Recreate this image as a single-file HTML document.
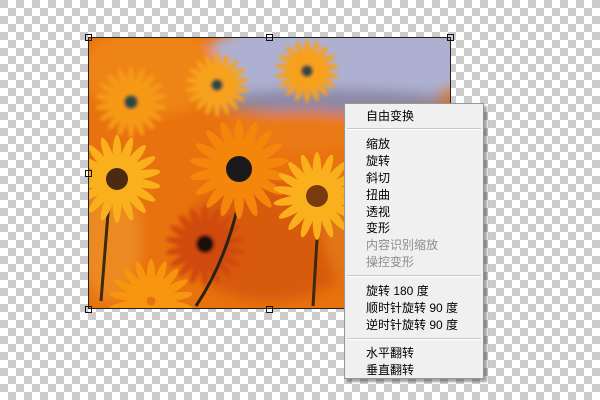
<!DOCTYPE html>
<html><head><meta charset="utf-8"><style>
html,body{margin:0;padding:0;width:600px;height:400px;overflow:hidden}
body{position:relative;background-color:#fff;
background-image:linear-gradient(45deg,#ccc 25%,transparent 25%,transparent 75%,#ccc 75%),linear-gradient(45deg,#ccc 25%,transparent 25%,transparent 75%,#ccc 75%);
background-size:16px 16px;background-position:8px 0,0 8px;}
#img{position:absolute;left:88px;top:37px;width:363px;height:272px;overflow:hidden;border:1px solid #222;box-sizing:border-box}
.h{position:absolute;width:7px;height:7px;border:1px solid #111;box-sizing:border-box}
#menu{position:absolute;left:344px;top:103px;width:140px;height:276px;background:#f0f0f0;border:1px solid #979797;box-sizing:border-box;box-shadow:3px 3px 2px rgba(0,0,0,.35);
font-family:"Liberation Sans","Noto Sans CJK SC","WenQuanYi Zen Hei",sans-serif;font-size:12px;color:#000}
.it{position:absolute;left:21px;line-height:14px;white-space:nowrap}
.dis{color:#8d8d8d}
.sep{position:absolute;left:2px;right:2px;height:1px;background:#c8c8c8;border-bottom:1px solid #fff}
</style></head><body>
<div id="img">
<svg width="363" height="272" viewBox="88 37 363 272" xmlns="http://www.w3.org/2000/svg">
<defs>
<filter id="b"><feGaussianBlur stdDeviation="6"/></filter>
<filter id="b2"><feGaussianBlur stdDeviation="1.5"/></filter>
<ellipse id="p" cx="0" cy="-0.55" rx="0.1" ry="0.45"/>
<g id="fl">
<use href="#p"/><use href="#p" transform="rotate(20)"/><use href="#p" transform="rotate(40)"/><use href="#p" transform="rotate(60)"/><use href="#p" transform="rotate(80)"/><use href="#p" transform="rotate(100)"/><use href="#p" transform="rotate(120)"/><use href="#p" transform="rotate(140)"/><use href="#p" transform="rotate(160)"/><use href="#p" transform="rotate(180)"/><use href="#p" transform="rotate(200)"/><use href="#p" transform="rotate(220)"/><use href="#p" transform="rotate(240)"/><use href="#p" transform="rotate(260)"/><use href="#p" transform="rotate(280)"/><use href="#p" transform="rotate(300)"/><use href="#p" transform="rotate(320)"/><use href="#p" transform="rotate(340)"/>
</g>
</defs>
<rect x="88" y="37" width="363" height="272" fill="#e8720e"/>
<g filter="url(#b)">
<ellipse cx="340" cy="60" rx="140" ry="45" fill="#aeb0d2"/>
<ellipse cx="330" cy="100" rx="120" ry="12" fill="#8c88a6"/>
<ellipse cx="150" cy="70" rx="70" ry="45" fill="#ee8418"/>
<ellipse cx="270" cy="240" rx="90" ry="60" fill="#d85a10"/>
<ellipse cx="380" cy="220" rx="60" ry="80" fill="#e27616"/>
<ellipse cx="420" cy="280" rx="40" ry="30" fill="#c05018"/>
<ellipse cx="110" cy="240" rx="30" ry="60" fill="#ec8a20"/>
<ellipse cx="300" cy="130" rx="80" ry="20" fill="#ea7a14"/>
</g>
<g filter="url(#b2)">
<g fill="#f69a16" transform="translate(130,101) scale(36)"><use href="#fl"/></g><circle cx="130" cy="101" r="7" fill="#2a4a40"/>
<g fill="#f7a21c" transform="translate(216,84) scale(32)"><use href="#fl"/></g><circle cx="216" cy="84" r="6" fill="#2a4a40"/>
<g fill="#f7a01c" transform="translate(306,70) scale(32)"><use href="#fl"/></g><circle cx="306" cy="70" r="6" fill="#2a4a40"/>
<g fill="#d04a10" transform="translate(204,245) scale(40)"><use href="#fl"/></g><circle cx="204" cy="243" r="9" fill="#1a1010"/>
</g>
<path d="M238 200 Q225 260 195 305" stroke="#2a2210" stroke-width="3" fill="none"/>
<path d="M108 200 L100 300" stroke="#3a2a10" stroke-width="3" fill="none"/>
<path d="M318 205 L312 305" stroke="#3a2a10" stroke-width="3" fill="none"/>
<g fill="#f4860c" transform="translate(238,168) scale(50)"><use href="#fl"/></g><circle cx="238" cy="168" r="13" fill="#1a1a1a"/>
<g fill="#f9b01c" transform="translate(116,178) scale(44)"><use href="#fl"/></g><circle cx="116" cy="178" r="11" fill="#4a2a10"/>
<g fill="#f9b01c" transform="translate(316,195) scale(44)"><use href="#fl"/></g><circle cx="316" cy="195" r="11" fill="#7a3a10"/>
<g fill="#f7960e" transform="translate(150,300) scale(42)"><use href="#fl"/></g>
</svg>
</div>
<div class="h" style="left:85px;top:34px"></div>
<div class="h" style="left:266px;top:34px"></div>
<div class="h" style="left:447px;top:34px"></div>
<div class="h" style="left:85px;top:170px"></div>
<div class="h" style="left:85px;top:306px"></div>
<div class="h" style="left:266px;top:306px"></div>
<div id="menu">
<div class="it" style="top:5px">自由变换</div>
<div class="sep" style="top:24px"></div>
<div class="it" style="top:33px">缩放</div>
<div class="it" style="top:50px">旋转</div>
<div class="it" style="top:67px">斜切</div>
<div class="it" style="top:84px">扭曲</div>
<div class="it" style="top:101px">透视</div>
<div class="it" style="top:117px">变形</div>
<div class="it dis" style="top:134px">内容识别缩放</div>
<div class="it dis" style="top:151px">操控变形</div>
<div class="sep" style="top:171px"></div>
<div class="it" style="top:180px">旋转 180 度</div>
<div class="it" style="top:197px">顺时针旋转 90 度</div>
<div class="it" style="top:214px">逆时针旋转 90 度</div>
<div class="sep" style="top:234px"></div>
<div class="it" style="top:242px">水平翻转</div>
<div class="it" style="top:259px">垂直翻转</div>
</div>
</body></html>
